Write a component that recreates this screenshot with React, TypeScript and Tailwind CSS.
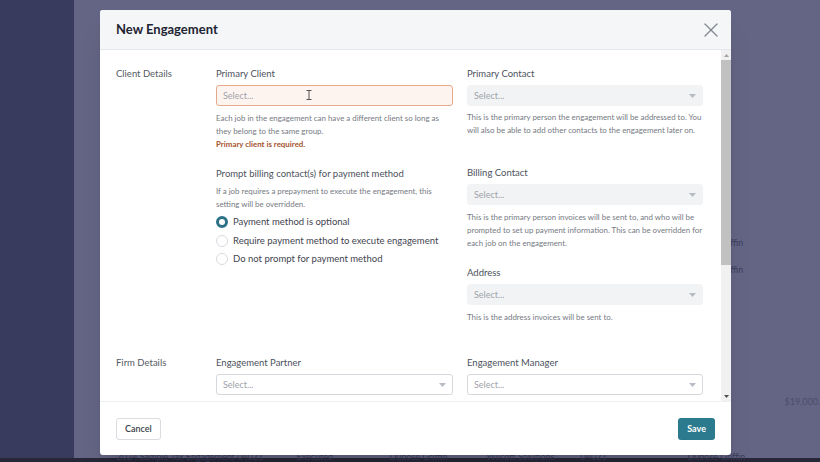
import { X } from 'lucide-react';

const font = { fontFamily: 'Lato, "Open Sans", sans-serif' };

function Caret() {
  return (
    <svg width="7" height="4" viewBox="0 0 7 4" className="shrink-0">
      <path d="M0 0 L7 0 L3.5 4 Z" fill="#b7bcc4" />
    </svg>
  );
}

function SelectBox({ variant = 'filled' }: { variant?: 'filled' | 'error' | 'outline' }) {
  const cls =
    variant === 'error'
      ? 'border-[#e7a98d] bg-[#fdf4ef]'
      : variant === 'outline'
      ? 'border-[#d5d8dd] bg-white'
      : 'border-[#f2f3f5] bg-[#f2f3f5]';
  return (
    <div className={`mt-[5px] flex h-[21px] items-center justify-between rounded-[3px] border px-[6px] ${cls}`}>
      <span className="text-[9px] text-[#9ea3ab]">Select...</span>
      {variant !== 'error' && <Caret />}
    </div>
  );
}

function Label({ children }: { children: React.ReactNode }) {
  return <div className="text-[9.5px] leading-[13px] text-[#4d525c]">{children}</div>;
}

function Help({ children, className = '' }: { children: React.ReactNode; className?: string }) {
  return <div className={`text-[7.9px] leading-[13px] text-[#767a83] ${className}`}>{children}</div>;
}

function Radio({ checked, label }: { checked?: boolean; label: string }) {
  return (
    <div className="flex h-[18.5px] items-center gap-[5px]">
      {checked ? (
        <span className="h-[12px] w-[12px] rounded-full border-[3px] border-[#2c7185] bg-white" />
      ) : (
        <span className="h-[12px] w-[12px] rounded-full border border-[#d8dadf] bg-white" />
      )}
      <span className="text-[9.5px] text-[#3f4450]">{label}</span>
    </div>
  );
}

export default function App() {
  return (
    <div className="relative h-[462px] w-[820px] overflow-hidden" style={font}>
      {/* page behind the overlay */}
      <div className="flex h-[458px]">
        <div className="w-[74px] bg-[#383b5d]" />
        <div className="flex flex-1 flex-col bg-[#646584] text-[9px] leading-[13px] text-[#3c3e5c]">
          <div className="mt-[236px] pl-[612px]">Dubose Griffin</div>
          <div className="mt-[14px] pl-[612px]">Dubose Griffin</div>
          <div className="mt-[119px] pl-[711px] text-[#4b4d6c]">$19,000.</div>
          <div className="mt-[42px] flex text-[#3a3c58]">
            <span className="w-[223px] pl-[43px]">2024 Sample Tax Engagement 04021</span>
            <span className="w-[93px]">Executed</span>
            <span className="w-[97px]">Dubose Griffin</span>
            <span className="w-[94px]">Wilcott Solutions</span>
            <span className="w-[107px]">04021</span>
            <span>Dubose Griffin</span>
          </div>
        </div>
      </div>
      <div className="h-[4px] bg-[#262838]" />

      {/* modal */}
      <div className="absolute left-[100px] top-[10px] flex h-[445px] w-[631px] flex-col overflow-hidden rounded-[3px] bg-white shadow-xl">
        <div className="flex h-[40px] shrink-0 items-center justify-between border-b border-[#e4e7eb] bg-[#f4f6f8] pl-[16px] pr-[8px]">
          <span className="mt-[1px] text-[13px] font-bold text-[#1f2433]">New Engagement</span>
          <X size={24} strokeWidth={1.3} className="mt-[1px] text-[#80858e]" />
        </div>

        <div className="flex min-h-0 flex-1">
          <div className="relative flex-1 overflow-hidden pl-[16px] pt-[17px]">
            {/* Client details */}
            <div className="flex">
              <div className="w-[100px] text-[9.5px] leading-[13px] text-[#555a64]">Client Details</div>
              <div className="w-[237px]">
                <Label>Primary Client</Label>
                <SelectBox variant="error" />
                <Help className="mt-[6px]">
                  Each job in the engagement can have a different client so long as they belong to the same group.
                </Help>
                <div className="text-[7.9px] font-bold leading-[13px] text-[#a4532e]">Primary client is required.</div>
                <div className="mt-[16px]">
                  <Label>Prompt billing contact(s) for payment method</Label>
                </div>
                <Help className="mt-[5px]">
                  If a job requires a prepayment to execute the engagement, this setting will be overridden.
                </Help>
                <div className="mt-[2px]">
                  <Radio checked label="Payment method is optional" />
                  <Radio label="Require payment method to execute engagement" />
                  <Radio label="Do not prompt for payment method" />
                </div>
              </div>
              <div className="ml-[14px] w-[236px]">
                <Label>Primary Contact</Label>
                <SelectBox />
                <Help className="mt-[5px]">
                  This is the primary person the engagement will be addressed to. You will also be able to add other
                  contacts to the engagement later on.
                </Help>
                <div className="mt-[29px]">
                  <Label>Billing Contact</Label>
                </div>
                <SelectBox />
                <Help className="mt-[6px]">
                  This is the primary person invoices will be sent to, and who will be prompted to set up payment
                  information. This can be overridden for each job on the engagement.
                </Help>
                <div className="mt-[16px]">
                  <Label>Address</Label>
                </div>
                <SelectBox />
                <Help className="mt-[6px]">This is the address invoices will be sent to.</Help>
              </div>
            </div>

            {/* Firm details */}
            <div className="mt-[32px] flex">
              <div className="w-[100px] text-[9.5px] leading-[13px] text-[#555a64]">Firm Details</div>
              <div className="w-[237px]">
                <Label>Engagement Partner</Label>
                <SelectBox variant="outline" />
              </div>
              <div className="ml-[14px] w-[236px]">
                <Label>Engagement Manager</Label>
                <SelectBox variant="outline" />
              </div>
            </div>

            {/* text cursor */}
            <svg width="6" height="10" viewBox="0 0 6 10" className="absolute left-[206px] top-[40px]">
              <path d="M0.5 0.5h5M3 0.5v9M0.5 9.5h5" stroke="#555" strokeWidth="1" fill="none" />
            </svg>
          </div>

          {/* scrollbar */}
          <div className="flex w-[10px] shrink-0 flex-col bg-[#f1f1f1]">
            <div className="flex h-[10px] items-center justify-center">
              <svg width="5" height="3" viewBox="0 0 5 3">
                <path d="M0 3 L5 3 L2.5 0 Z" fill="#a3a3a3" />
              </svg>
            </div>
            <div className="h-[205px] bg-[#c1c1c1]" />
            <div className="flex-1" />
            <div className="flex h-[10px] items-center justify-center">
              <svg width="5" height="3" viewBox="0 0 5 3">
                <path d="M0 0 L5 0 L2.5 3 Z" fill="#505050" />
              </svg>
            </div>
          </div>
        </div>

        <div className="flex h-[54px] shrink-0 items-center justify-between border-t border-[#eceef1] px-[16px]">
          <button className="h-[22px] rounded-[3px] border border-[#d9dce1] bg-white px-[8px] text-[9px] font-semibold text-[#3b3f4a]">
            Cancel
          </button>
          <button className="h-[22px] rounded-[3px] bg-[#2c7a8d] px-[9px] text-[9px] font-bold text-white">
            Save
          </button>
        </div>
      </div>
    </div>
  );
}
